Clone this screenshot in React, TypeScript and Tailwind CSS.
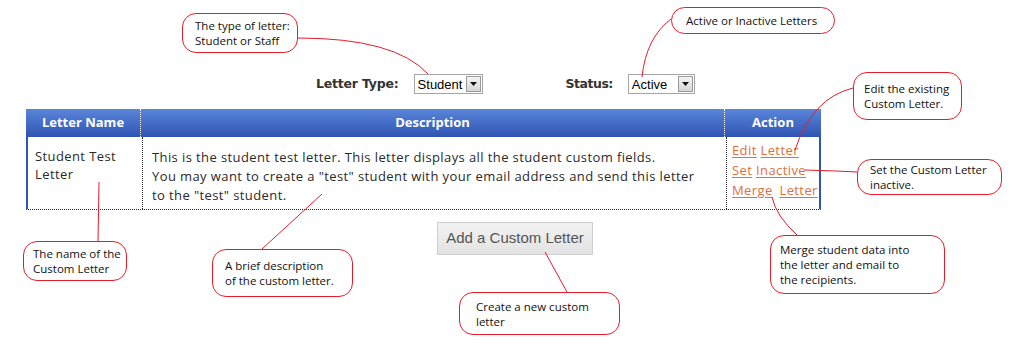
import React from 'react';

// Annotated screenshot: custom letters list with red callouts

const callouts = [
  { left: 182, top: 13, w: 116, h: 40, text: ['The type of letter:', 'Student or Staff'], pl: 12 },
  { left: 671, top: 7, w: 164, h: 27, text: ['Active or Inactive Letters'], pl: 14 },
  { left: 853, top: 72, w: 109, h: 48, text: ['Edit the existing', 'Custom Letter.'], pl: 10 },
  { left: 857, top: 159, w: 145, h: 36, text: ['Set the Custom Letter', 'inactive.'], pl: 12 },
  { left: 770, top: 235, w: 175, h: 59, text: ['Merge student data into', 'the letter and email to', 'the recipients.'], pl: 9 },
  { left: 23, top: 241, w: 104, h: 40, text: ['The name of the', 'Custom Letter'], pl: 9 },
  { left: 212, top: 249, w: 141, h: 48, text: ['A brief description', 'of the custom letter.'], pl: 12 },
  { left: 459, top: 292, w: 161, h: 43, text: ['Create a new custom', 'letter'], pl: 16 },
];

function FakeSelect({ value, width }: { value: string; width: number }) {
  return (
    <div
      className="flex items-center justify-between h-[20px] border border-[#a5a5a5] bg-white pl-[3px] pr-[1px]"
      style={{ width }}
    >
      <span className="text-[13px] text-black leading-none font-['Liberation_Sans',Arial,sans-serif]">
        {value}
      </span>
      <span className="flex items-center justify-center w-[15px] h-[16px] border border-[#9a9a9a] bg-gradient-to-b from-[#f4f4f4] to-[#d6d6d6]">
        <svg width="7" height="4" viewBox="0 0 7 4">
          <path d="M0 0 H7 L3.5 4 Z" fill="#111" />
        </svg>
      </span>
    </div>
  );
}

export default function App() {
  return (
    <div className="relative w-[1014px] h-[360px] overflow-hidden bg-white font-['Open_Sans',sans-serif] text-[#222]">
      {/* Filter row */}
      <div className="flex items-center pt-[74px]">
        <span className="ml-[316px] text-[12.5px] font-bold text-[#333] font-['DejaVu_Sans',sans-serif] tracking-[-0.2px]">
          Letter Type:
        </span>
        <div className="ml-[15px]">
          <FakeSelect value="Student" width={69} />
        </div>
        <span className="ml-[83px] text-[12.5px] font-bold text-[#333] font-['DejaVu_Sans',sans-serif] tracking-[-0.5px]">
          Status:
        </span>
        <div className="ml-[15px]">
          <FakeSelect value="Active" width={67} />
        </div>
      </div>

      {/* Table */}
      <div className="ml-[26px] mt-[15px] w-[795px]">
        <div className="grid grid-cols-[114px_584px_97px] h-[28px] bg-gradient-to-b from-[#5a86da] to-[#3053b3] text-white text-[13px] font-bold">
          <div className="flex items-center justify-center">Letter Name</div>
          <div className="flex items-center justify-center border-l border-dotted border-white">Description</div>
          <div className="flex items-center justify-center border-l border-dotted border-white">Action</div>
        </div>
        <div className="grid grid-cols-[114px_584px_97px] h-[73px] border-l-2 border-r-2 border-l-[#2f55bd] border-r-[#2f55bd] border-b border-b-[#222] [border-bottom-style:dotted] text-[13px] tracking-[0.4px] text-[#2a2a2a]">
          <div className="pl-[7px] pt-[10px] leading-[18px]">
            Student Test
            <br />
            Letter
          </div>
          <div className="pl-[9px] pt-[11px] leading-[19px] border-l border-dotted border-[#222]">
            This is the student test letter. This letter displays all the student custom fields.
            <br />
            You may want to create a "test" student with your email address and send this letter
            <br />
            to the "test" student.
          </div>
          <div className="pl-[5px] pt-[3px] leading-[20px] border-l border-dotted border-[#222] text-[#e0703c]">
            <div>
              <span className="underline underline-offset-2">Edit</span> <span className="underline underline-offset-2">Letter</span>
            </div>
            <div>
              <span className="underline underline-offset-2">Set</span> <span className="underline underline-offset-2">Inactive</span>
            </div>
            <div>
              <span className="underline underline-offset-2">Merge</span>{' '}
              <span className="ml-[3px] underline underline-offset-2">Letter</span>
            </div>
          </div>
        </div>
      </div>

      {/* Add button */}
      <div className="ml-[437px] mt-[12px] flex items-center justify-center w-[156px] h-[33px] border border-[#cfcfcf] bg-gradient-to-b from-[#f2f2f2] to-[#e3e3e3] text-[15px] text-[#555] font-['Liberation_Sans',Arial,sans-serif]">
        Add a Custom Letter
      </div>

      {/* Annotation lines */}
      <svg className="absolute left-0 top-0 pointer-events-none" width="1014" height="360">
        <g fill="none" stroke="#e51d2a" strokeWidth="1">
          <path d="M298 38 Q 395 38 428 74" />
          <path d="M671 19 Q 646 38 642 77" />
          <path d="M853 88 Q 812 98 795 150" />
          <path d="M857 172 L 836 171 L 805 170" />
          <path d="M797 235 Q 776 216 772 197" />
          <path d="M99 182 L 98 241" />
          <path d="M322 194 L 262 249" />
          <path d="M545 252 L 567 292" />
        </g>
      </svg>

      {/* Callouts */}
      {callouts.map((c, i) => (
        <div
          key={i}
          className="absolute flex flex-col justify-center rounded-[14px] border border-[#e51d2a] bg-white text-[11.5px] leading-[15px] text-[#111] font-['Open_Sans',sans-serif]"
          style={{ left: c.left, top: c.top, width: c.w, height: c.h, paddingLeft: c.pl }}
        >
          {c.text.map((t, j) => (
            <div key={j}>{t}</div>
          ))}
        </div>
      ))}
    </div>
  );
}
